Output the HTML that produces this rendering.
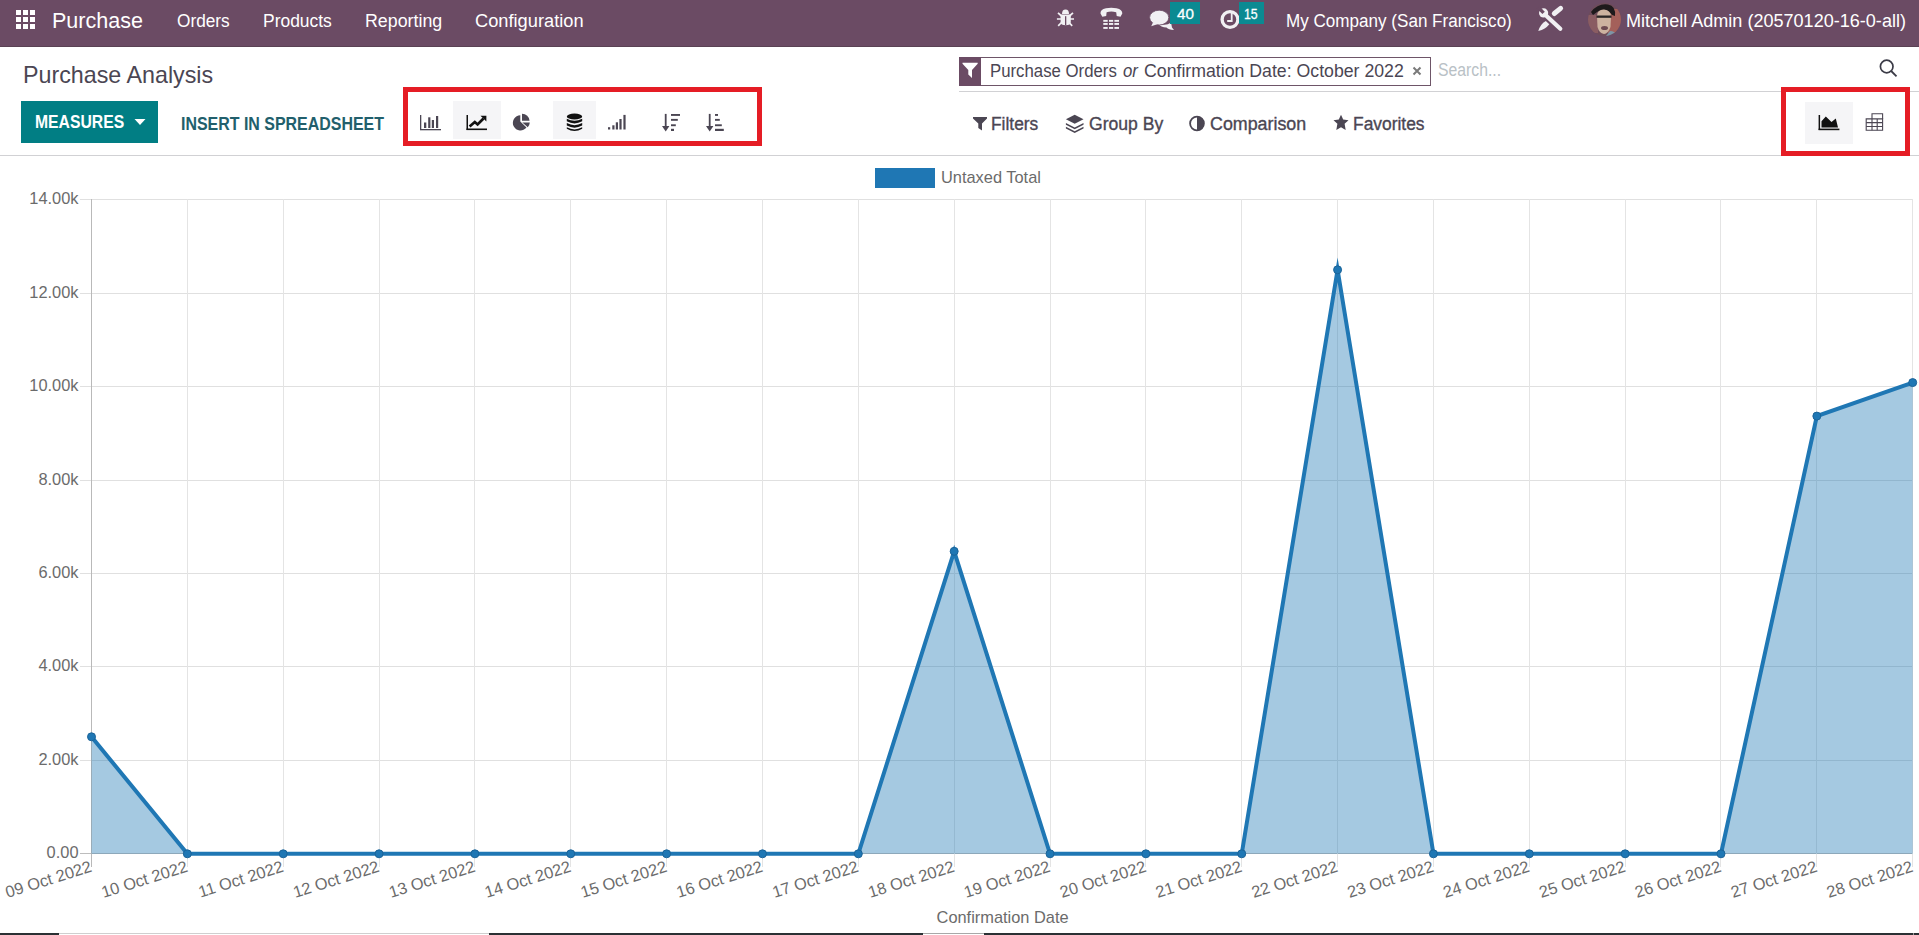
<!DOCTYPE html><html><head><meta charset="utf-8"><style>
html,body{margin:0;padding:0;}
body{width:1919px;height:935px;overflow:hidden;position:relative;background:#fff;font-family:"Liberation Sans",sans-serif;}
.t{position:absolute;line-height:1;white-space:nowrap;transform-origin:0 0;}
.abs{position:absolute;}
svg{position:absolute;overflow:visible;}
</style></head><body>
<div class="abs" style="left:0;top:0;width:1919px;height:46px;background:#6b4b64"></div>
<div class="abs" style="left:0;top:46px;width:1919px;height:1px;background:#5a4254"></div>
<div class="abs" style="left:16px;top:10px;width:5px;height:5px;background:#fff"></div>
<div class="abs" style="left:16px;top:17px;width:5px;height:5px;background:#fff"></div>
<div class="abs" style="left:16px;top:24px;width:5px;height:5px;background:#fff"></div>
<div class="abs" style="left:23px;top:10px;width:5px;height:5px;background:#fff"></div>
<div class="abs" style="left:23px;top:17px;width:5px;height:5px;background:#fff"></div>
<div class="abs" style="left:23px;top:24px;width:5px;height:5px;background:#fff"></div>
<div class="abs" style="left:30px;top:10px;width:5px;height:5px;background:#fff"></div>
<div class="abs" style="left:30px;top:17px;width:5px;height:5px;background:#fff"></div>
<div class="abs" style="left:30px;top:24px;width:5px;height:5px;background:#fff"></div>
<div class="t" style="left:52.00px;top:10.08px;font-size:22px;color:#fff;font-weight:normal;transform:scaleX(0.9790);">Purchase</div>
<div class="t" style="left:176.80px;top:11.86px;font-size:18px;color:#fff;font-weight:normal;transform:scaleX(0.9584);">Orders</div>
<div class="t" style="left:262.70px;top:11.86px;font-size:18px;color:#fff;font-weight:normal;transform:scaleX(0.9689);">Products</div>
<div class="t" style="left:364.80px;top:11.86px;font-size:18px;color:#fff;font-weight:normal;transform:scaleX(0.9894);">Reporting</div>
<div class="t" style="left:475.30px;top:11.86px;font-size:18px;color:#fff;font-weight:normal;transform:scaleX(1.0140);">Configuration</div>
<div class="t" style="left:1285.90px;top:11.66px;font-size:18px;color:#fff;font-weight:normal;transform:scaleX(0.9485);">My Company (San Francisco)</div>
<div class="t" style="left:1626.00px;top:11.66px;font-size:18px;color:#fff;font-weight:normal;transform:scaleX(1.0029);">Mitchell Admin (20570120-16-0-all)</div>
<svg style="left:0;top:0" width="1919" height="46" viewBox="0 0 1919 46">
<g fill="#f1f0f3">
<!-- bug -->
<path d="M1062 13.9 Q1062 9.6 1065.5 9.6 Q1069 9.6 1069 13.9 Z"/>
<path d="M1060.6 14.6 L1070.8 14.6 L1070.8 22 Q1070.8 25.2 1065.7 25.2 Q1060.6 25.2 1060.6 22 Z"/>
</g>
<g stroke="#f1f0f3" stroke-width="1.7" fill="none">
<path d="M1058 12.8 L1061.5 16 M1073 12.8 L1069.5 16 M1056.9 19 L1074 19 M1058.2 25.8 L1061.5 22.5 M1072.2 25.8 L1069 22.5"/>
</g>
<rect x="1065" y="16.2" width="1.3" height="9" fill="#6b4b64"/>
<!-- phone -->
<path d="M1100.5 13.5 Q1100 9.5 1106 8.3 Q1111.3 7.3 1116.5 8.3 Q1122.5 9.5 1122.3 13.5 L1120.5 16.8 L1116.7 16 L1116.2 12.2 Q1111.3 10.6 1106.6 12.2 L1106.2 16 L1102.3 16.8 Z" fill="#f1f0f3"/>
<g fill="#f1f0f3">
<rect x="1103.3" y="19.9" width="4.4" height="1.9"/><rect x="1109" y="19.9" width="4.2" height="1.9"/><rect x="1114.4" y="19.9" width="4.6" height="1.9"/>
<rect x="1103.3" y="23" width="4.4" height="1.9"/><rect x="1109" y="23" width="4.2" height="1.9"/><rect x="1114.4" y="23" width="4.6" height="1.9"/>
<rect x="1103.3" y="27" width="4.4" height="1.9"/><rect x="1109" y="27" width="4.2" height="1.9"/><rect x="1114.4" y="27" width="4.6" height="1.9"/>
</g>
<!-- chat -->
<path d="M1158 23.5 Q1166 26.5 1171 22.5 L1172 27.5 L1174 30 Q1168.5 29.5 1166.5 27.5 Q1161 27.5 1158 23.5 Z" fill="#f1f0f3"/>
<ellipse cx="1159.2" cy="17.6" rx="9.6" ry="7.4" fill="#f1f0f3" stroke="#6b4b64" stroke-width="0.8"/>
<path d="M1153 22.5 L1151.2 26.3 L1158 24 Z" fill="#f1f0f3"/>
<!-- clock -->
<circle cx="1230" cy="19.5" r="7.9" fill="none" stroke="#f1f0f3" stroke-width="3.3"/>
<path d="M1231.7 12.8 L1231.7 21 L1227.2 21" fill="none" stroke="#f1f0f3" stroke-width="1.8"/>
</svg>
<div class="abs" style="left:1170px;top:2px;width:29.6px;height:21.8px;background:#0b8a92"></div>
<div class="t" style="left:1176.60px;top:5.78px;font-size:15.5px;color:#fff;font-weight:normal;transform:scaleX(0.9823);-webkit-text-stroke:0.3px #fff;">40</div>
<div class="abs" style="left:1238.5px;top:2px;width:25.7px;height:21.8px;background:#0b8a92"></div>
<div class="t" style="left:1243.70px;top:5.78px;font-size:15.5px;color:#fff;font-weight:normal;transform:scaleX(0.7963);-webkit-text-stroke:0.3px #fff;">15</div>
<svg style="left:0;top:0" width="1919" height="46" viewBox="0 0 1919 46">
<path d="M1546.8 16.3 L1560.3 28.8" stroke="#f1f0f3" stroke-width="4.2" stroke-linecap="round"/>
<circle cx="1543.6" cy="12.9" r="4.6" fill="#f1f0f3"/>
<path d="M1543.6 12.9 L1538 7.3" stroke="#6b4b64" stroke-width="3.4" stroke-linecap="butt"/>
<path d="M1554.3 13.5 L1560.6 8.4" stroke="#f1f0f3" stroke-width="5" stroke-linecap="round"/>
<path d="M1545.8 21 L1549.3 24.3 Q1545.5 29.3 1538.3 31 Q1540.2 24.3 1545.8 21 Z" fill="#f1f0f3"/>
</svg>
<svg style="left:1588px;top:3px" width="33" height="33" viewBox="0 0 33 33">
<defs><clipPath id="av"><circle cx="16.5" cy="16.5" r="16.5"/></clipPath></defs>
<g clip-path="url(#av)">
<rect width="33" height="33" fill="#6e4c5a"/>
<path d="M22 6 L33 6 L33 30 L20 30 Z" fill="#a4605a"/>
<path d="M0 12 L10 12 L10 30 L0 30 Z" fill="#8a5c62"/>
<path d="M3 9 Q10 0 20 1.5 Q28 3 27 13 L24 12 Q20 6 13 7 Q8 9 5 12 Z" fill="#1e1a1c"/>
<path d="M9 13 Q9 6.5 16 6.5 Q23 7 23 14 L22.5 24 Q20 31 16 31 Q11 30 9.5 24 Z" fill="#cdb2a0"/>
<rect x="8.5" y="12.5" width="15" height="2.3" fill="#2b2526"/>
<ellipse cx="16.5" cy="25" rx="3.5" ry="2" fill="#6e4a52"/>
<path d="M18 33 L22 28 Q27 28 30 33 Z" fill="#7d95a6"/>
</g></svg>
<div class="t" style="left:22.50px;top:63.48px;font-size:24px;color:#4b4653;font-weight:normal;transform:scaleX(0.9695);">Purchase Analysis</div>
<div class="abs" style="left:21px;top:101px;width:137px;height:42px;background:#017e84"></div>
<div class="t" style="left:35.40px;top:112.96px;font-size:18px;color:#fff;font-weight:bold;transform:scaleX(0.8740);">MEASURES</div>
<svg style="left:133.5px;top:118.5px" width="13" height="7" viewBox="0 0 13 7"><path d="M0.5 0 L11.5 0 L6 6 Z" fill="#fff"/></svg>
<div class="t" style="left:180.50px;top:114.86px;font-size:18px;color:#225f6c;font-weight:bold;transform:scaleX(0.8863);">INSERT IN SPREADSHEET</div>
<div class="abs" style="left:453px;top:101px;width:48px;height:38px;background:#f5f5f7"></div>
<div class="abs" style="left:553px;top:101px;width:43px;height:38px;background:#f5f5f7"></div>
<svg style="left:419px;top:114px" width="23" height="17" viewBox="0 0 23 17">
<g fill="#4b4653"><rect x="1" y="1" width="1.3" height="15"/><rect x="1" y="15" width="21" height="1.3"/>
<rect x="5" y="8.5" width="2.3" height="5.5"/><rect x="9.2" y="3.3" width="2.2" height="10.7"/><rect x="12.8" y="6" width="2.2" height="8"/><rect x="17" y="2" width="2.2" height="12"/></g></svg>
<svg style="left:465px;top:114px" width="23" height="17" viewBox="0 0 23 17">
<g fill="#111"><rect x="1.5" y="1" width="1.5" height="15"/><rect x="1.5" y="14.5" width="20.5" height="1.6"/></g>
<path d="M4.6 12.5 L9.8 8 L12.6 10.5 L18.5 4.5" fill="none" stroke="#111" stroke-width="2.7"/>
<path d="M15.5 1.7 L21.4 1.7 L21.4 7.6 Z" fill="#111"/></svg>
<svg style="left:512px;top:113px" width="20" height="18" viewBox="0 0 20 18">
<path d="M8.3 2.3 A7.6 7.6 0 1 0 14.5 14.5 L8.3 8.6 Z" fill="#4b4653"/>
<path d="M10 0.7 A7.6 7.6 0 0 1 17.6 7.7 L10 7.7 Z" fill="#4b4653"/>
<path d="M10.3 9.6 L17.8 9.6 A7.6 7.6 0 0 1 15.8 14.3 Z" fill="#4b4653"/></svg>
<svg style="left:566px;top:113px" width="18" height="20" viewBox="0 0 18 20">
<g fill="#111">
<ellipse cx="8.5" cy="3.5" rx="7.7" ry="3"/>
<path d="M0.8 5.7 Q8.5 10 16.2 5.7 L16.2 8.3 Q8.5 12.6 0.8 8.3 Z"/>
<path d="M0.8 10 Q8.5 14.3 16.2 10 L16.2 12.6 Q8.5 16.9 0.8 12.6 Z"/>
<path d="M0.8 14.3 Q8.5 18.6 16.2 14.3 L16.2 15.8 Q8.5 20.2 0.8 15.8 Z"/>
</g></svg>
<svg style="left:607px;top:114px" width="21" height="17" viewBox="0 0 21 17">
<g fill="#4b4653"><rect x="1" y="13.2" width="2.2" height="2.3"/><rect x="5.3" y="11.3" width="2.2" height="4.2"/><rect x="8.8" y="8.3" width="2.2" height="7.2"/><rect x="12.4" y="5" width="2.2" height="10.5"/><rect x="16.4" y="0.9" width="2.2" height="14.6"/></g></svg>
<svg style="left:661px;top:113px" width="21" height="20" viewBox="0 0 21 20">
<g fill="#4b4653"><rect x="3.8" y="0.9" width="1.8" height="14"/><path d="M1 13 L8.4 13 L4.7 18.5 Z"/>
<rect x="10" y="1" width="9" height="1.9"/><rect x="10" y="5.9" width="6.8" height="1.9"/><rect x="10" y="11.3" width="4.8" height="1.9"/><rect x="10" y="15.8" width="3" height="2.2"/></g></svg>
<svg style="left:705px;top:113px" width="21" height="20" viewBox="0 0 21 20">
<g fill="#4b4653"><rect x="3.8" y="0.9" width="1.8" height="14"/><path d="M1 13 L8.4 13 L4.7 18.5 Z"/>
<rect x="10" y="1" width="3" height="1.9"/><rect x="10" y="5.9" width="4.8" height="1.9"/><rect x="10" y="11.3" width="6.8" height="1.9"/><rect x="10" y="15.8" width="8.8" height="2.2"/></g></svg>
<div class="abs" style="left:959px;top:57px;width:470px;height:27px;border:1px solid #6e5568;background:#fff"></div>
<div class="abs" style="left:959px;top:57px;width:22px;height:29px;background:#6b4b64"></div>
<svg style="left:962px;top:62px" width="17" height="17" viewBox="0 0 17 17">
<path d="M0.5 0.8 L15.7 0.8 L15.7 1.8 L10 8 L10 16 L6.3 12.6 L6.3 8 L0.5 1.8 Z" fill="#fff"/></svg>
<div class="t" style="left:989.50px;top:63.39px;font-size:17.5px;color:#4b4653;font-weight:normal;transform:scaleX(0.9584);">Purchase Orders</div>
<div class="t" style="left:1122.50px;top:63.39px;font-size:17.5px;color:#4b4653;font-style:italic;transform:scaleX(0.9575);">or</div>
<div class="t" style="left:1144.00px;top:63.39px;font-size:17.5px;color:#4b4653;font-weight:normal;transform:scaleX(1.0116);">Confirmation Date: October 2022</div>
<svg style="left:1412px;top:66px" width="10" height="10" viewBox="0 0 10 10">
<path d="M1.5 1.5 L8.5 8.5 M8.5 1.5 L1.5 8.5" stroke="#7a7a7a" stroke-width="2"/></svg>
<div class="t" style="left:1438.00px;top:61.99px;font-size:17.5px;color:#b9c1c6;font-weight:normal;transform:scaleX(0.9000);">Search...</div>
<svg style="left:1877px;top:57px" width="22" height="22" viewBox="0 0 22 22">
<circle cx="9.7" cy="9.5" r="6.3" fill="none" stroke="#3b3b47" stroke-width="1.7"/>
<path d="M14.2 14 L19.5 19.3" stroke="#3b3b47" stroke-width="1.8"/></svg>
<div class="abs" style="left:959px;top:91px;width:960px;height:1px;background:#d1d1d4"></div>
<svg style="left:972px;top:116px" width="16" height="16" viewBox="0 0 16 16">
<path d="M1 1 L15 1 L15 2.5 L10 7.5 L10 14.5 L6.3 12 L6.3 7.5 L1 2.5 Z" fill="#4b4653"/></svg>
<div class="t" style="left:991.30px;top:114.56px;font-size:18px;color:#4b4653;font-weight:normal;transform:scaleX(0.9641);-webkit-text-stroke:0.35px #4b4653;">Filters</div>
<svg style="left:1065px;top:114px" width="20" height="20" viewBox="0 0 20 20">
<path d="M9.7 0.8 L18.5 5.3 L9.7 9.8 L0.9 5.3 Z" fill="#4b4653"/>
<path d="M0.9 9 L9.7 13.5 L18.5 9 L18.5 10.8 L9.7 15.3 L0.9 10.8 Z" fill="#4b4653"/>
<path d="M0.9 12.8 L9.7 17.3 L18.5 12.8 L18.5 14.6 L9.7 19.1 L0.9 14.6 Z" fill="#4b4653"/></svg>
<div class="t" style="left:1088.80px;top:114.56px;font-size:18px;color:#4b4653;font-weight:normal;transform:scaleX(0.9770);-webkit-text-stroke:0.35px #4b4653;">Group By</div>
<svg style="left:1188px;top:115px" width="18" height="17" viewBox="0 0 18 17">
<circle cx="9" cy="8.5" r="6.9" fill="none" stroke="#4b4653" stroke-width="1.8"/>
<path d="M9 1.6 A6.9 6.9 0 0 1 9 15.4 Z" fill="#4b4653"/></svg>
<div class="t" style="left:1209.50px;top:114.56px;font-size:18px;color:#4b4653;font-weight:normal;transform:scaleX(0.9915);-webkit-text-stroke:0.35px #4b4653;">Comparison</div>
<svg style="left:1332px;top:114px" width="18" height="17" viewBox="0 0 18 17">
<path d="M9 0.8 L11.2 5.6 L16.5 6.2 L12.6 9.8 L13.7 15.9 L9 13.2 L4.3 15.9 L5.4 9.8 L1.5 6.2 L6.8 5.6 Z" fill="#4b4653"/></svg>
<div class="t" style="left:1353.30px;top:114.56px;font-size:18px;color:#4b4653;font-weight:normal;transform:scaleX(0.9665);-webkit-text-stroke:0.35px #4b4653;">Favorites</div>
<div class="abs" style="left:1805px;top:102px;width:48px;height:42px;background:#f5f5f7"></div>
<svg style="left:0;top:0" width="1919" height="160" viewBox="0 0 1919 160">
<rect x="1818.6" y="115" width="1.5" height="15" fill="#111"/><rect x="1818.6" y="128.6" width="20.8" height="1.6" fill="#111"/>
<path d="M1821.5 127.6 L1821.5 121.3 L1825.8 116.4 L1831.5 122 L1835.8 118.6 L1838 127.6 Z" fill="#111"/>
<g fill="none" stroke="#4b4653" stroke-width="1.1">
<path d="M1866.2 118.9 L1882.6 118.9 L1882.6 130.3 L1866.2 130.3 Z"/>
<path d="M1872 118.9 L1872 113.8 L1882.6 113.8 L1882.6 118.9"/>
<path d="M1872 118.9 L1872 130.3 M1877.2 118.9 L1877.2 130.3 M1866.2 122.6 L1882.6 122.6 M1866.2 126.5 L1882.6 126.5"/>
</g></svg>
<div class="abs" style="left:0;top:155px;width:1919px;height:1px;background:#d1d1d4"></div>
<div class="abs" style="left:403px;top:87px;width:349px;height:49px;border:5px solid #e51d25"></div>
<div class="abs" style="left:1781px;top:87px;width:119px;height:59px;border:5px solid #e51d25"></div>
<svg style="left:0;top:0" width="1919" height="935" viewBox="0 0 1919 935">
<path d="M80 199.5 L1913 199.5" stroke="#e0e0e0" stroke-width="1"/>
<path d="M80 293.5 L1913 293.5" stroke="#e0e0e0" stroke-width="1"/>
<path d="M80 386.5 L1913 386.5" stroke="#e0e0e0" stroke-width="1"/>
<path d="M80 480.5 L1913 480.5" stroke="#e0e0e0" stroke-width="1"/>
<path d="M80 573.5 L1913 573.5" stroke="#e0e0e0" stroke-width="1"/>
<path d="M80 666.5 L1913 666.5" stroke="#e0e0e0" stroke-width="1"/>
<path d="M80 760.5 L1913 760.5" stroke="#e0e0e0" stroke-width="1"/>
<path d="M80 853.5 L1913 853.5" stroke="#bdbdbd" stroke-width="1"/>
<path d="M187.5 199 L187.5 867" stroke="#e4e4e4" stroke-width="1"/>
<path d="M283.5 199 L283.5 867" stroke="#e4e4e4" stroke-width="1"/>
<path d="M379.5 199 L379.5 867" stroke="#e4e4e4" stroke-width="1"/>
<path d="M474.5 199 L474.5 867" stroke="#e4e4e4" stroke-width="1"/>
<path d="M570.5 199 L570.5 867" stroke="#e4e4e4" stroke-width="1"/>
<path d="M666.5 199 L666.5 867" stroke="#e4e4e4" stroke-width="1"/>
<path d="M762.5 199 L762.5 867" stroke="#e4e4e4" stroke-width="1"/>
<path d="M858.5 199 L858.5 867" stroke="#e4e4e4" stroke-width="1"/>
<path d="M954.5 199 L954.5 867" stroke="#e4e4e4" stroke-width="1"/>
<path d="M1050.5 199 L1050.5 867" stroke="#e4e4e4" stroke-width="1"/>
<path d="M1145.5 199 L1145.5 867" stroke="#e4e4e4" stroke-width="1"/>
<path d="M1241.5 199 L1241.5 867" stroke="#e4e4e4" stroke-width="1"/>
<path d="M1337.5 199 L1337.5 867" stroke="#e4e4e4" stroke-width="1"/>
<path d="M1433.5 199 L1433.5 867" stroke="#e4e4e4" stroke-width="1"/>
<path d="M1529.5 199 L1529.5 867" stroke="#e4e4e4" stroke-width="1"/>
<path d="M1625.5 199 L1625.5 867" stroke="#e4e4e4" stroke-width="1"/>
<path d="M1720.5 199 L1720.5 867" stroke="#e4e4e4" stroke-width="1"/>
<path d="M1816.5 199 L1816.5 867" stroke="#e4e4e4" stroke-width="1"/>
<path d="M1912.5 199 L1912.5 867" stroke="#e4e4e4" stroke-width="1"/>
<path d="M91.5 199 L91.5 867" stroke="#b9b9b9" stroke-width="1"/>
<path d="M91.50 736.80 L187.35 853.80 L283.21 853.80 L379.06 853.80 L474.91 853.80 L570.76 853.80 L666.62 853.80 L762.47 853.80 L858.32 853.80 L954.17 551.30 L1050.03 853.80 L1145.88 853.80 L1241.73 853.80 L1337.58 269.80 L1433.44 853.80 L1529.29 853.80 L1625.14 853.80 L1720.99 853.80 L1816.85 416.10 L1912.70 382.60 L1912.70 853.8 L91.50 853.8 Z" fill="rgba(31,119,180,0.4)"/>
<path d="M91.50 736.80 L187.35 853.80 L283.21 853.80 L379.06 853.80 L474.91 853.80 L570.76 853.80 L666.62 853.80 L762.47 853.80 L858.32 853.80 L954.17 551.30 L1050.03 853.80 L1145.88 853.80 L1241.73 853.80 L1337.58 269.80 L1433.44 853.80 L1529.29 853.80 L1625.14 853.80 L1720.99 853.80 L1816.85 416.10 L1912.70 382.60" fill="none" stroke="#1f77b4" stroke-width="4" stroke-linejoin="miter" stroke-miterlimit="10"/>
<circle cx="91.50" cy="736.80" r="4" fill="#1f77b4" stroke="#1b6499" stroke-width="1"/>
<circle cx="187.35" cy="853.80" r="4" fill="#1f77b4" stroke="#1b6499" stroke-width="1"/>
<circle cx="283.21" cy="853.80" r="4" fill="#1f77b4" stroke="#1b6499" stroke-width="1"/>
<circle cx="379.06" cy="853.80" r="4" fill="#1f77b4" stroke="#1b6499" stroke-width="1"/>
<circle cx="474.91" cy="853.80" r="4" fill="#1f77b4" stroke="#1b6499" stroke-width="1"/>
<circle cx="570.76" cy="853.80" r="4" fill="#1f77b4" stroke="#1b6499" stroke-width="1"/>
<circle cx="666.62" cy="853.80" r="4" fill="#1f77b4" stroke="#1b6499" stroke-width="1"/>
<circle cx="762.47" cy="853.80" r="4" fill="#1f77b4" stroke="#1b6499" stroke-width="1"/>
<circle cx="858.32" cy="853.80" r="4" fill="#1f77b4" stroke="#1b6499" stroke-width="1"/>
<circle cx="954.17" cy="551.30" r="4" fill="#1f77b4" stroke="#1b6499" stroke-width="1"/>
<circle cx="1050.03" cy="853.80" r="4" fill="#1f77b4" stroke="#1b6499" stroke-width="1"/>
<circle cx="1145.88" cy="853.80" r="4" fill="#1f77b4" stroke="#1b6499" stroke-width="1"/>
<circle cx="1241.73" cy="853.80" r="4" fill="#1f77b4" stroke="#1b6499" stroke-width="1"/>
<circle cx="1337.58" cy="269.80" r="4" fill="#1f77b4" stroke="#1b6499" stroke-width="1"/>
<circle cx="1433.44" cy="853.80" r="4" fill="#1f77b4" stroke="#1b6499" stroke-width="1"/>
<circle cx="1529.29" cy="853.80" r="4" fill="#1f77b4" stroke="#1b6499" stroke-width="1"/>
<circle cx="1625.14" cy="853.80" r="4" fill="#1f77b4" stroke="#1b6499" stroke-width="1"/>
<circle cx="1720.99" cy="853.80" r="4" fill="#1f77b4" stroke="#1b6499" stroke-width="1"/>
<circle cx="1816.85" cy="416.10" r="4" fill="#1f77b4" stroke="#1b6499" stroke-width="1"/>
<circle cx="1912.70" cy="382.60" r="4" fill="#1f77b4" stroke="#1b6499" stroke-width="1"/>
<text x="78.5" y="204.4" text-anchor="end" font-size="16.4" fill="#6b6b6b" font-family="Liberation Sans">14.00k</text>
<text x="78.5" y="298.4" text-anchor="end" font-size="16.4" fill="#6b6b6b" font-family="Liberation Sans">12.00k</text>
<text x="78.5" y="391.4" text-anchor="end" font-size="16.4" fill="#6b6b6b" font-family="Liberation Sans">10.00k</text>
<text x="78.5" y="485.4" text-anchor="end" font-size="16.4" fill="#6b6b6b" font-family="Liberation Sans">8.00k</text>
<text x="78.5" y="578.4" text-anchor="end" font-size="16.4" fill="#6b6b6b" font-family="Liberation Sans">6.00k</text>
<text x="78.5" y="671.4" text-anchor="end" font-size="16.4" fill="#6b6b6b" font-family="Liberation Sans">4.00k</text>
<text x="78.5" y="765.4" text-anchor="end" font-size="16.4" fill="#6b6b6b" font-family="Liberation Sans">2.00k</text>
<text x="78.5" y="858.4" text-anchor="end" font-size="16.4" fill="#6b6b6b" font-family="Liberation Sans">0.00</text>
<text transform="translate(91.00,865.7) rotate(-17.5)" text-anchor="end" y="5.8" font-size="16.4" fill="#6b6b6b" font-family="Liberation Sans">09 Oct 2022</text>
<text transform="translate(186.85,865.7) rotate(-17.5)" text-anchor="end" y="5.8" font-size="16.4" fill="#6b6b6b" font-family="Liberation Sans">10 Oct 2022</text>
<text transform="translate(282.71,865.7) rotate(-17.5)" text-anchor="end" y="5.8" font-size="16.4" fill="#6b6b6b" font-family="Liberation Sans">11 Oct 2022</text>
<text transform="translate(378.56,865.7) rotate(-17.5)" text-anchor="end" y="5.8" font-size="16.4" fill="#6b6b6b" font-family="Liberation Sans">12 Oct 2022</text>
<text transform="translate(474.41,865.7) rotate(-17.5)" text-anchor="end" y="5.8" font-size="16.4" fill="#6b6b6b" font-family="Liberation Sans">13 Oct 2022</text>
<text transform="translate(570.26,865.7) rotate(-17.5)" text-anchor="end" y="5.8" font-size="16.4" fill="#6b6b6b" font-family="Liberation Sans">14 Oct 2022</text>
<text transform="translate(666.12,865.7) rotate(-17.5)" text-anchor="end" y="5.8" font-size="16.4" fill="#6b6b6b" font-family="Liberation Sans">15 Oct 2022</text>
<text transform="translate(761.97,865.7) rotate(-17.5)" text-anchor="end" y="5.8" font-size="16.4" fill="#6b6b6b" font-family="Liberation Sans">16 Oct 2022</text>
<text transform="translate(857.82,865.7) rotate(-17.5)" text-anchor="end" y="5.8" font-size="16.4" fill="#6b6b6b" font-family="Liberation Sans">17 Oct 2022</text>
<text transform="translate(953.67,865.7) rotate(-17.5)" text-anchor="end" y="5.8" font-size="16.4" fill="#6b6b6b" font-family="Liberation Sans">18 Oct 2022</text>
<text transform="translate(1049.53,865.7) rotate(-17.5)" text-anchor="end" y="5.8" font-size="16.4" fill="#6b6b6b" font-family="Liberation Sans">19 Oct 2022</text>
<text transform="translate(1145.38,865.7) rotate(-17.5)" text-anchor="end" y="5.8" font-size="16.4" fill="#6b6b6b" font-family="Liberation Sans">20 Oct 2022</text>
<text transform="translate(1241.23,865.7) rotate(-17.5)" text-anchor="end" y="5.8" font-size="16.4" fill="#6b6b6b" font-family="Liberation Sans">21 Oct 2022</text>
<text transform="translate(1337.08,865.7) rotate(-17.5)" text-anchor="end" y="5.8" font-size="16.4" fill="#6b6b6b" font-family="Liberation Sans">22 Oct 2022</text>
<text transform="translate(1432.94,865.7) rotate(-17.5)" text-anchor="end" y="5.8" font-size="16.4" fill="#6b6b6b" font-family="Liberation Sans">23 Oct 2022</text>
<text transform="translate(1528.79,865.7) rotate(-17.5)" text-anchor="end" y="5.8" font-size="16.4" fill="#6b6b6b" font-family="Liberation Sans">24 Oct 2022</text>
<text transform="translate(1624.64,865.7) rotate(-17.5)" text-anchor="end" y="5.8" font-size="16.4" fill="#6b6b6b" font-family="Liberation Sans">25 Oct 2022</text>
<text transform="translate(1720.49,865.7) rotate(-17.5)" text-anchor="end" y="5.8" font-size="16.4" fill="#6b6b6b" font-family="Liberation Sans">26 Oct 2022</text>
<text transform="translate(1816.35,865.7) rotate(-17.5)" text-anchor="end" y="5.8" font-size="16.4" fill="#6b6b6b" font-family="Liberation Sans">27 Oct 2022</text>
<text transform="translate(1912.20,865.7) rotate(-17.5)" text-anchor="end" y="5.8" font-size="16.4" fill="#6b6b6b" font-family="Liberation Sans">28 Oct 2022</text>
<text x="1002.6" y="922.9" text-anchor="middle" font-size="16.4" fill="#6b6b6b" font-family="Liberation Sans">Confirmation Date</text>
<rect x="875" y="168" width="60" height="20" fill="#1f77b4"/>
<text x="941" y="182.7" font-size="16.4" fill="#6b6b6b" font-family="Liberation Sans">Untaxed Total</text>
</svg>
<div class="abs" style="left:0;top:933px;width:1919px;height:2px;background:#2b3134"></div>
<div class="abs" style="left:59px;top:933px;width:430px;height:2px;background:#fff;border-top:1px solid #cfcfcf;box-sizing:border-box"></div>
<div class="abs" style="left:923px;top:933px;width:61px;height:2px;background:#fff;border-top:1px solid #a8a8a8;box-sizing:border-box"></div>
<div class="abs" style="left:1913px;top:933px;width:1px;height:2px;background:#9a9a9a"></div>
</body></html>
